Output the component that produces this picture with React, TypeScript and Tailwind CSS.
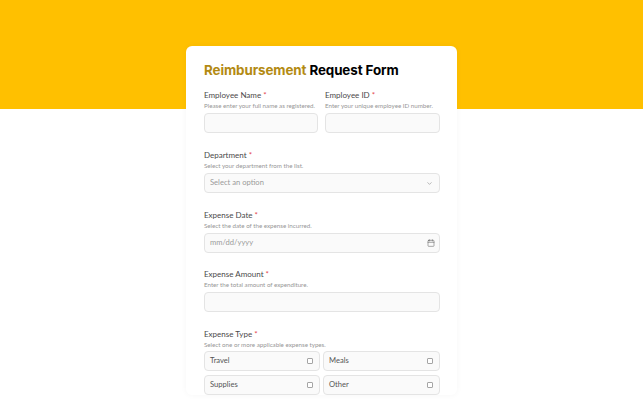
import { Calendar, ChevronDown } from "lucide-react";
import type { ReactNode } from "react";

function FieldHead({ label, hint }: { label: string; hint: string }) {
  return (
    <div>
      <div className="h-[10px] text-[8px] leading-[9px] whitespace-nowrap text-[#4a4a4a]">
        {label} <span className="text-[#e5484d]">*</span>
      </div>
      <div className="h-[10px] text-[6.2px] leading-[9.5px] whitespace-nowrap text-[#969696]">{hint}</div>
    </div>
  );
}

function Box({ children }: { children?: ReactNode }) {
  return (
    <div className="mt-[2px] flex h-[20px] items-center justify-between rounded-[4px] border border-[#e4e4e4] bg-[#fafafa] pl-[5px] pr-[6px] text-[7.6px] text-[#9a9a9a]">
      {children}
    </div>
  );
}

function Check({ label }: { label: string }) {
  return (
    <div className="flex h-[20px] items-center justify-between rounded-[4px] border border-[#e4e4e4] bg-[#fafafa] pl-[5px] pr-[6px] text-[7.6px] text-[#555]">
      {label}
      <span className="h-[6px] w-[6px] rounded-[1px] border border-[#a5a5a5] bg-white" />
    </div>
  );
}

export default function App() {
  return (
    <div className="h-screen overflow-hidden bg-white font-['Lato',sans-serif]">
      <div className="h-[109px] bg-[#ffc000]" />
      <div className="mx-auto -mt-[63px] w-[271px] rounded-[6px] bg-white pl-[18px] pr-[17px] pt-[15px] shadow-[0_0_6px_rgba(0,0,0,0.04)]">
        <h1 className="h-[18px] font-['Inter',sans-serif] text-[13.4px] leading-[18px] font-bold tracking-[-0.1px] whitespace-nowrap text-black">
          <span className="text-[#b38a12]">Reimbursement</span> Request Form
        </h1>
        <div className="mt-[12px] grid grid-cols-[114px_115px] gap-x-[7px]">
          <div>
            <FieldHead label="Employee Name" hint="Please enter your full name as registered." />
            <Box />
          </div>
          <div>
            <FieldHead label="Employee ID" hint="Enter your unique employee ID number." />
            <Box />
          </div>
        </div>
        <div className="mt-[18px]">
          <FieldHead label="Department" hint="Select your department from the list." />
          <Box>
            Select an option
            <ChevronDown size={7} strokeWidth={1.5} className="text-[#666]" />
          </Box>
        </div>
        <div className="mt-[17.5px]">
          <FieldHead label="Expense Date" hint="Select the date of the expense incurred." />
          <Box>
            mm/dd/yyyy
            <Calendar size={8} strokeWidth={1.5} className="-mr-[2px] text-[#555]" />
          </Box>
        </div>
        <div className="mt-[17.5px]">
          <FieldHead label="Expense Amount" hint="Enter the total amount of expenditure." />
          <Box />
        </div>
        <div className="mt-[17.5px]">
          <FieldHead label="Expense Type" hint="Select one or more applicable expense types." />
          <div className="mt-[1.5px] grid grid-cols-[116px_117px] gap-x-[3px] gap-y-[4px]">
            <Check label="Travel" />
            <Check label="Meals" />
            <Check label="Supplies" />
            <Check label="Other" />
          </div>
        </div>
      </div>
    </div>
  );
}
